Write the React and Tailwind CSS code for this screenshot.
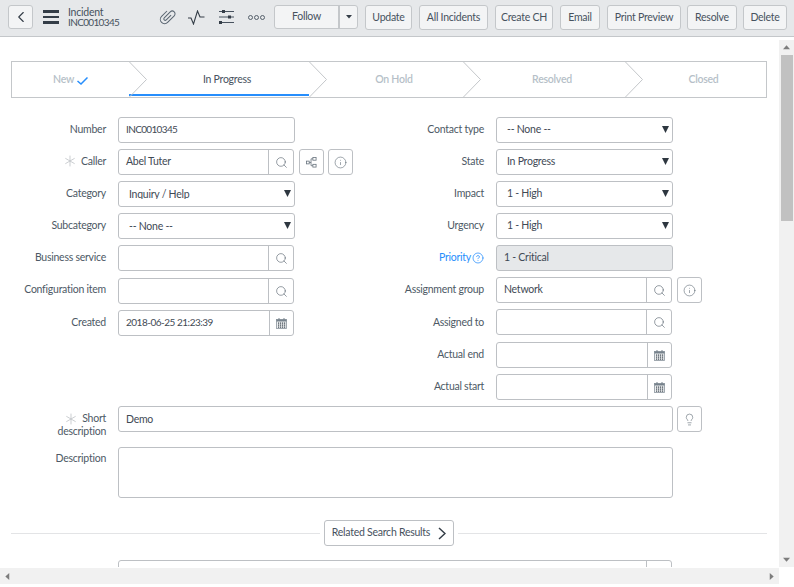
import React from "react";
import { Search, Info, Lightbulb, ChevronLeft, HelpCircle, Asterisk } from "lucide-react";

const Cal = () => (
  <svg width="11" height="11" viewBox="0 0 11 11">
    <rect x="0.5" y="1.5" width="10" height="9" fill="#eef0f1" stroke="#8a949d" strokeWidth="0.8" />
    <rect x="0.5" y="1.5" width="10" height="2" fill="#77828c" />
    <rect x="2.5" y="0" width="1" height="2" fill="#77828c" />
    <rect x="7.5" y="0" width="1" height="2" fill="#77828c" />
    {[4.5, 6.5, 8.5].map((y) => [2, 4, 6, 8].map((x) => <rect key={`${x}-${y}`} x={x} y={y} width="1.2" height="1.2" fill="#3d4751" />))}
  </svg>
);

const Tree = () => (
  <svg width="11" height="11" viewBox="0 0 12 12" fill="none" stroke="#6b7680" strokeWidth="0.9">
    <rect x="0.5" y="4.5" width="3" height="3" />
    <rect x="7.5" y="0.5" width="3.5" height="3" />
    <rect x="7.5" y="8" width="3.5" height="3" />
    <path d="M3.5 6H5.5M5.5 2V9.5M5.5 2H7.5M5.5 9.5H7.5" />
  </svg>
);

const Btn = ({ w, children }) => (
  <button className={`h-[25px] ${w} shrink-0 rounded-[3px] border border-[#c4c7ca] bg-[#f3f4f5] text-center text-[#47525e]`}>{children}</button>
);

const Addon = ({ children, w = "w-[25px]" }) => (
  <div className={`flex h-full ${w} shrink-0 items-center justify-center border-l border-[#bdc0c4]`}>{children}</div>
);

const SearchIcon = () => <Search size={13} strokeWidth={1.1} className="mt-px text-[#4f5b67]" />;

const Box = ({ w, h = "h-[26px]", value, select, low, addon, bg = "bg-white", text = "" }) => (
  <div className={`flex ${h} ${w} shrink-0 items-center rounded-[3px] border border-[#bdc0c4] ${bg} overflow-hidden`}>
    <span className={`min-w-0 flex-1 truncate ${low ? "pb-0" : "pb-[2px]"} ${select ? "pl-[10px]" : "pl-[7px]"} text-[#3f4a55] ${text}`}>{value}</span>
    {select && (
      <svg className="mb-[2px] mr-[3px]" width="7" height="7" viewBox="0 0 7 7"><path d="M0 0H7L3.5 7Z" fill="#2e3740" /></svg>
    )}
    {addon}
  </div>
);

const Side = ({ children }) => (
  <div className="flex h-[26px] w-[25px] shrink-0 items-center justify-center rounded-[3px] border border-[#bdc0c4] bg-white text-[#4f5b67]">{children}</div>
);

const Star = () => <Asterisk size={20} strokeWidth={1} className="-my-[4px] mr-[1px] text-[#c0c4c8]" />;

const Row = ({ label, star, blue, mt = "mt-[6px]", lift = "pb-[2px]", children }) => (
  <div className={`flex ${mt}`}>
    <div className={`flex h-[26px] w-[106px] shrink-0 items-center justify-end ${lift} ${blue ? "text-[#278efc]" : "text-[#4d5965]"}`}>
      {star && <Star />}
      {label}
      {blue && <HelpCircle size={12} strokeWidth={1.5} className="ml-[1px] mt-[2px]" />}
    </div>
    <div className="ml-[12px] flex gap-[4px]">{children}</div>
  </div>
);

const Chevron = ({ className }) => (
  <svg className={`absolute top-[-1px] ${className}`} width="20" height="37" viewBox="0 0 20 37" fill="none" stroke="#c4c7ca">
    <path d="M0.5 0L18.5 18.5L0.5 37" />
  </svg>
);

const Step = ({ w, children, active, last }) => (
  <div className={`relative flex h-full ${w} items-center justify-center pl-[18px] pr-[2px] ${active ? "text-[#47525e]" : "font-semibold text-[#b6bfc8]"}`}>
    {children}
    {!last && <Chevron className="right-[-19px] z-10" />}
    {active && <div className="absolute bottom-[1px] left-0 h-[2px] w-full bg-[#278efc]" />}
  </div>
);

const Arrow = ({ d, className }) => (
  <svg width="7" height="7" viewBox="0 0 8 8" className={className}><path d={d} fill="#7d7d7d" /></svg>
);

export default function App() {
  return (
    <div className="flex h-[587px] w-[794px] flex-col overflow-hidden bg-white text-[10.5px] leading-none tracking-[-0.25px] text-[#47525e]" style={{ fontFamily: '"Lato", "Noto Sans", sans-serif' }}>
      <header className="flex h-[37px] shrink-0 items-center border-b border-[#c4c7ca] bg-[#e6e8ea] pb-[2px] pl-[8px]">
        <button className="flex h-[24px] w-[25px] items-center justify-center rounded-[3px] border border-[#c4c7ca] bg-[#f3f4f5]">
          <ChevronLeft size={18} strokeWidth={1.5} className="text-[#343d47]" />
        </button>
        <div className="ml-[10px] flex w-[16px] flex-col gap-[3px]">
          <div className="h-[2.5px] bg-[#343d47]" />
          <div className="h-[2.5px] bg-[#343d47]" />
          <div className="h-[2.5px] bg-[#343d47]" />
        </div>
        <div className="ml-[9px] flex w-[90px] flex-col">
          <div>Incident</div>
          <div className="text-[10px] tracking-[-0.65px]">INC0010345</div>
        </div>
        <svg width="18" height="18" viewBox="0 0 18 18" fill="none" stroke="#5a6672" strokeWidth="1.2">
          <g transform="translate(9 9) rotate(45) scale(0.85) translate(-7 -11)">
            <path d="M2 6V15a5 5 0 0 0 10 0V4a3.3 3.3 0 0 0-6.6 0V14a1.7 1.7 0 0 0 3.4 0V6" />
          </g>
        </svg>
        <svg className="ml-[12px]" width="17" height="15" viewBox="0 0 17 15" fill="none" stroke="#343d47" strokeWidth="1.1">
          <path d="M0 8L3 8L5.5 14L9.5 1L12 7L16.5 7" />
        </svg>
        <svg className="ml-[13px]" width="17" height="16" viewBox="0 0 17 16" fill="none" stroke="#47525e">
          <path d="M1 2.5H16M1 8H16M1 13.5H16" />
          <rect x="4" y="1" width="3" height="3" fill="#343d47" stroke="none" />
          <rect x="10" y="6.5" width="3" height="3" fill="#343d47" stroke="none" />
          <rect x="1" y="12" width="3" height="3" fill="#343d47" stroke="none" />
        </svg>
        <svg className="ml-[13px]" width="17" height="5" viewBox="0 0 17 5" fill="none" stroke="#47525e" strokeWidth="0.9">
          <circle cx="2.5" cy="2.5" r="2" /><circle cx="8.5" cy="2.5" r="2" /><circle cx="14.5" cy="2.5" r="2" />
        </svg>
        <div className="ml-[9px] flex h-[24px] w-[84px] rounded-[3px] border border-[#c4c7ca] bg-[#f3f4f5]">
          <div className="flex flex-1 items-center justify-center pb-[1px]">Follow</div>
          <div className="flex w-[19px] items-center justify-center border-l-2 border-[#c4c7ca]">
            <svg width="6" height="4" viewBox="0 0 6 4"><path d="M0 0H6L3 3.5Z" fill="#343d47" /></svg>
          </div>
        </div>
        <div className="ml-[7px] flex gap-[7px]">
          <Btn w="w-[47px]">Update</Btn>
          <Btn w="w-[69px]">All Incidents</Btn>
          <Btn w="w-[58px]">Create CH</Btn>
          <Btn w="w-[40px]">Email</Btn>
          <Btn w="w-[74px]">Print Preview</Btn>
          <Btn w="-ml-px w-[50px]">Resolve</Btn>
          <Btn w="-ml-px w-[44px]">Delete</Btn>
        </div>
      </header>

      <div className="flex min-h-0 flex-1">
        <main className="h-[530px] w-[779px] shrink-0 overflow-hidden pl-[11px] pr-[12px] pt-[24px]">
          <div className="flex h-[37px] w-[756px] border border-[#c4c7ca]">
            <div className="relative flex h-full w-[117px] items-center justify-center gap-[3px] font-semibold text-[#b6bfc8]">
              New
              <svg className="mt-[2px]" width="11" height="8" viewBox="0 0 11 8" fill="none" stroke="#278efc" strokeWidth="1.5"><path d="M0.5 4L4 7L10.5 0.5" /></svg>
              <Chevron className="right-[-19px] z-10" />
            </div>
            <Step w="w-[180px]" active>In Progress</Step>
            <Step w="w-[154px]">On Hold</Step>
            <Step w="w-[162px]">Resolved</Step>
            <Step w="w-[141px]" last>Closed</Step>
          </div>

          <div className="-ml-[11px] mt-[19px] flex">
            <div className="w-[378px] shrink-0">
              <Row label="Number" mt=""><Box w="w-[177px]" value="INC0010345" text="text-[10px] tracking-[-0.65px]" /></Row>
              <Row label="Caller" star>
                <Box w="w-[176px]" value="Abel Tuter" addon={<Addon><SearchIcon /></Addon>} />
                <div className="ml-[1px] flex gap-[4px]">
                  <Side><Tree /></Side>
                  <Side><Info size={13} strokeWidth={1} /></Side>
                </div>
              </Row>
              <Row label="Category"><Box w="w-[177px]" value="Inquiry / Help" select low /></Row>
              <Row label="Subcategory"><Box w="w-[177px]" value="-- None --" select low /></Row>
              <Row label="Business service"><Box w="w-[176px]" value="" addon={<Addon><SearchIcon /></Addon>} /></Row>
              <Row label="Configuration item" mt="mt-[7px]" lift="pb-[4px]"><Box w="w-[176px]" value="" addon={<Addon><SearchIcon /></Addon>} /></Row>
              <Row label="Created"><Box w="w-[176px]" value="2018-06-25 21:23:39" text="text-[10px] tracking-[-0.49px]" addon={<Addon w="w-[24px]"><Cal /></Addon>} /></Row>
            </div>
            <div className="shrink-0">
              <Row label="Contact type" mt=""><Box w="w-[177px]" value="-- None --" select /></Row>
              <Row label="State"><Box w="w-[177px]" value="In Progress" select /></Row>
              <Row label="Impact"><Box w="w-[177px]" value="1 - High" select /></Row>
              <Row label="Urgency"><Box w="w-[177px]" value="1 - High" select /></Row>
              <Row label="Priority" blue><Box w="w-[177px]" value="1 - Critical" bg="bg-[#e6e8ea]" /></Row>
              <Row label="Assignment group">
                <Box w="w-[176px]" value="Network" addon={<Addon><SearchIcon /></Addon>} />
                <div className="ml-[1px]"><Side><Info size={13} strokeWidth={1} /></Side></div>
              </Row>
              <Row label="Assigned to" lift="pb-0"><Box w="w-[176px]" value="" addon={<Addon><SearchIcon /></Addon>} /></Row>
              <Row label="Actual end" mt="mt-[7px]"><Box w="w-[176px]" value="" addon={<Addon w="w-[24px]"><Cal /></Addon>} /></Row>
              <Row label="Actual start"><Box w="w-[176px]" value="" addon={<Addon w="w-[24px]"><Cal /></Addon>} /></Row>
            </div>
          </div>

          <div className="-ml-[11px] mt-[6px] flex h-[26px]">
            <div className="flex w-[106px] shrink-0 flex-col items-end pt-[6px] leading-[13px] text-[#4d5965]">
              <div className="flex items-center"><Star />Short</div>
              <div>description</div>
            </div>
            <div className="ml-[12px] flex gap-[4px]">
              <Box w="w-[555px]" value="Demo" low />
              <Side><Lightbulb size={13} strokeWidth={1} /></Side>
            </div>
          </div>
          <div className="-ml-[11px] mt-[15px] flex">
            <div className="w-[106px] shrink-0 pt-[6px] text-right text-[#4d5965]">Description</div>
            <div className="ml-[12px] h-[51px] w-[555px] rounded-[3px] border border-[#bdc0c4]" />
          </div>

          <div className="mt-[22px] flex items-center gap-[4px]">
            <div className="h-px flex-1 bg-[#e3e4e6]" />
            <button className="flex h-[26px] w-[130px] items-center justify-center gap-[8px] whitespace-nowrap rounded-[3px] border border-[#bdc0c4] bg-white pb-[2px] text-[#47525e]">
              Related Search Results
              <svg className="mt-[3px]" width="8" height="13" viewBox="0 0 8 13" fill="none" stroke="#343d47" strokeWidth="1.5"><path d="M1 1L7 6.5L1 12" /></svg>
            </button>
            <div className="h-px flex-1 bg-[#e3e4e6]" />
          </div>

          <div className="-ml-[11px] mt-[14px] flex pl-[118px]">
            <Box w="w-[554px]" value="" addon={<Addon><SearchIcon /></Addon>} />
          </div>
        </main>

        <aside className="mt-[3px] flex h-[527px] w-[15px] flex-col items-center bg-[#f1f1f1]">
          <Arrow d="M4 1.5L8 6H0Z" className="mt-[4px]" />
          <div className="ml-[1px] mt-[4px] h-[166px] w-[12px] bg-[#c1c1c1]" />
          <Arrow d="M0 2H8L4 6.5Z" className="mb-[4px] mt-auto" />
        </aside>
      </div>

      <div className="flex h-[16px] w-[779px] shrink-0 items-center justify-between bg-[#f1f1f1] px-[4px]">
        <Arrow d="M6 0V8L1.5 4Z" />
        <Arrow d="M2 0V8L6.5 4Z" />
      </div>
      <div className="h-[3px] shrink-0" />
    </div>
  );
}
